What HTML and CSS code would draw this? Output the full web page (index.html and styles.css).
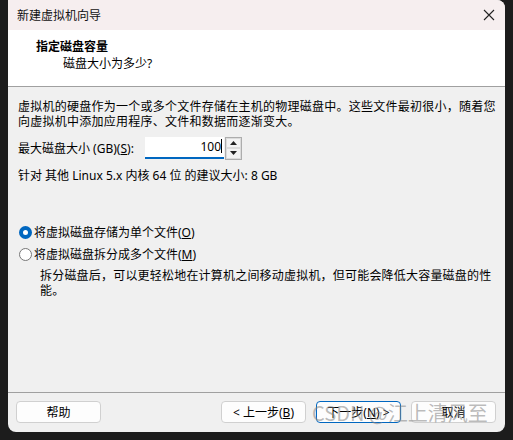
FILE: index.html
```html
<!DOCTYPE html>
<html>
<head>
<meta charset="utf-8">
<link rel="stylesheet" href="styles.css">
</head>
<body>
<div class="window">
  <div class="titlebar">
    <span class="title">新建虚拟机向导</span>
    <svg class="close" width="12" height="12" viewBox="0 0 12 12"><path d="M1 1 L11 11 M11 1 L1 11" stroke="#222" stroke-width="1.1" fill="none"/></svg>
  </div>
  <div class="header">
    <div class="h-title">指定磁盘容量</div>
    <div class="h-sub">磁盘大小为多少?</div>
  </div>
  <div class="content">
    <p class="desc">虚拟机的硬盘作为一个或多个文件存储在主机的物理磁盘中。这些文件最初很小，随着您向虚拟机中添加应用程序、文件和数据而逐渐变大。</p>
    <div class="size-row">
      <span class="label">最大磁盘大小 (GB)(<u>S</u>):</span>
      <div class="input">100<span class="caret"></span></div>
      <div class="spin">
        <div class="spin-btn"><svg width="7" height="4" viewBox="0 0 7 4"><path d="M0 4 L3.5 0 L7 4Z" fill="#222"/></svg></div>
        <div class="spin-btn"><svg width="7" height="4" viewBox="0 0 7 4"><path d="M0 0 L3.5 4 L7 0Z" fill="#222"/></svg></div>
      </div>
    </div>
    <p class="rec">针对 其他 Linux 5.x 内核 64 位 的建议大小: 8 GB</p>
    <div class="options">
      <div class="radio-row"><span class="radio on"></span><span>将虚拟磁盘存储为单个文件(<u>O</u>)</span></div>
      <div class="radio-row"><span class="radio"></span><span>将虚拟磁盘拆分成多个文件(<u>M</u>)</span></div>
      <p class="note">拆分磁盘后，可以更轻松地在计算机之间移动虚拟机，但可能会降低大容量磁盘的性能。</p>
    </div>
  </div>
  <div class="footer">
    <button class="btn">帮助</button>
    <div class="spacer"></div>
    <button class="btn">&lt; 上一步(<u>B</u>)</button>
    <button class="btn primary">下一步(<u>N</u>) &gt;</button>
    <button class="btn">取消</button>
    <div class="watermark">CSDN @江上清风至</div>
  </div>
</div>
</body>
</html>
```
FILE: styles.css
```css
html, body {
  margin: 0;
  padding: 0;
  background: #1c1c1c;
  width: 513px;
  height: 440px;
  overflow: hidden;
}
body {
  font-family: "Noto Sans", "Noto Sans CJK SC", sans-serif;
  font-size: 12px;
  color: #000;
}
.window {
  margin-left: 8px;
  width: 497px;
  height: 432px;
  background: #f0f0f0;
  border-radius: 0 8px 8px 8px;
  overflow: hidden;
  display: flex;
  flex-direction: column;
}
.titlebar {
  height: 30px;
  background: #f6eeef;
  display: flex;
  align-items: center;
  padding: 0 9px 0 9px;
  flex: none;
}
.title {
  flex: 1;
  font-size: 12px;
  color: #111;
}
.close {
  margin-right: 1px;
}
.header {
  height: 56px;
  background: #fff;
  border-bottom: 1px solid #a0a0a0;
  flex: none;
  padding-left: 28px;
  box-sizing: content-box;
}
.h-title {
  font-weight: bold;
  margin-top: 9px;
  line-height: 16px;
}
.h-sub {
  margin-left: 27px;
  line-height: 16px;
  margin-top: 1px;
}
.content {
  flex: 1;
  padding: 12px 6px 0 10px;
  border-bottom: 1px solid #a0a0a0;
}
.desc {
  margin: 0;
  line-height: 15px;
  letter-spacing: 0.25px;
}
.size-row {
  display: flex;
  align-items: center;
  margin-top: 8px;
  height: 22px;
}
.label {
  width: 127px;
  white-space: nowrap;
}
.input {
  width: 77px;
  height: 20px;
  background: #fff;
  border-bottom: 2px solid #0067c0;
  text-align: right;
  line-height: 20px;
  padding-right: 2px;
}
.caret {
  display: inline-block;
  width: 1px;
  height: 14px;
  background: #000;
  vertical-align: -2px;
}
.spin {
  margin-left: 1px;
  width: 15px;
  height: 21px;
  border: 1px solid #adadad;
  display: flex;
  flex-direction: column;
  background: #f0f0f0;
}
.spin-btn {
  flex: 1;
  display: flex;
  align-items: center;
  justify-content: center;
  border: 1px solid #dcdcdc;
  background: #f3f3f3;
}
.rec {
  margin: 9px 0 0 0;
  line-height: 15px;
}
.options {
  margin-top: 38px;
}
.radio-row {
  display: flex;
  align-items: center;
  height: 22px;
}
.radio {
  width: 11px;
  height: 11px;
  border: 1px solid #777;
  border-radius: 50%;
  background: #fff;
  margin: 0 2px 0 1px;
  box-sizing: content-box;
}
.radio.on {
  background: #fff;
  border: 4px solid #0067c0;
  width: 5px;
  height: 5px;
}
.note {
  margin: 3px 4px 0 22px;
  line-height: 15px;
  letter-spacing: 0.2px;
}
.footer {
  height: 39px;
  flex: none;
  display: flex;
  align-items: center;
  padding: 0 9px 0 8px;
  gap: 10px;
  position: relative;
}
.spacer {
  flex: 1;
}
.btn {
  width: 85px;
  height: 22px;
  background: #fdfdfd;
  border: 1px solid #d0d0d0;
  border-radius: 4px;
  font-family: inherit;
  font-size: 12px;
  color: #000;
  padding: 0;
  margin-top: -2px;
}
.btn.primary {
  border-color: #0067c0;
}
.watermark {
  position: absolute;
  left: 304px;
  top: 5px;
  font-size: 20px;
  color: rgba(130, 130, 130, 0.55);
  white-space: nowrap;
  font-family: "Noto Sans CJK SC", sans-serif;
}
```
